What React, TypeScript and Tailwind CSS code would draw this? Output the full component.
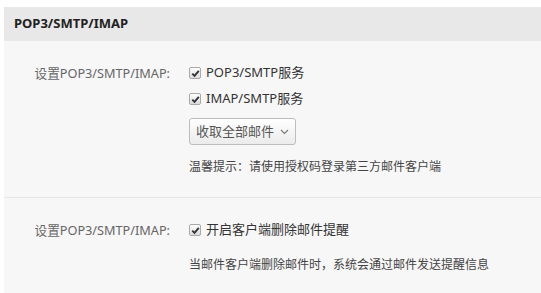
import React from "react";

const FONT = { fontFamily: '"Noto Sans", "Noto Sans CJK SC", sans-serif' };

function Check() {
  return (
    <span className="inline-flex w-[12px] h-[12px] rounded-[2px] border border-[#a9a9a9] bg-gradient-to-b from-[#fdfdfd] to-[#dcdcdc] items-center justify-center mr-[5px] shrink-0">
      <svg width="9" height="9" viewBox="0 0 9 9">
        <path d="M1.3 4.6 L3.5 6.8 L7.8 1.8" fill="none" stroke="#333" strokeWidth="1.9" />
      </svg>
    </span>
  );
}

function CheckRow({ label }: { label: string }) {
  return (
    <div className="h-[20px] flex items-center text-[13px] text-[#333]">
      <Check />
      <span>{label}</span>
    </div>
  );
}

export default function App() {
  return (
    <div className="h-[293px] bg-white pt-[7px] pl-[4px] overflow-hidden" style={FONT}>
      <div className="h-[34px] bg-[#e8e8e8] pl-[10px] flex items-center text-[13px] font-bold text-[#222]">
        POP3/SMTP/IMAP
      </div>

      <div className="bg-[#f7f7f7] pt-[22px] pb-[20px] flex border-b border-[#e6e6e6]">
        <div className="w-[166px] text-right h-[20px] leading-[20px] text-[12.7px] text-[#666]">设置POP3/SMTP/IMAP:</div>
        <div className="ml-[19px] flex flex-col">
          <CheckRow label="POP3/SMTP服务" />
          <div className="mt-[6px]"><CheckRow label="IMAP/SMTP服务" /></div>
          <button className="mt-[9px] w-[107px] h-[27px] rounded-[3px] border border-[#bdbdbd] bg-gradient-to-b from-[#ffffff] to-[#ebebeb] flex items-center justify-center gap-[6px] text-[13px] text-[#555]">
            <span>收取全部邮件</span>
            <svg width="9" height="6" viewBox="0 0 9 6">
              <path d="M1 1 L4.5 4.5 L8 1" fill="none" stroke="#777" strokeWidth="1.1" />
            </svg>
          </button>
          <div className="mt-[12px] h-[20px] leading-[20px] text-[12px] text-[#444]">温馨提示：请使用授权码登录第三方邮件客户端</div>
        </div>
      </div>

      <div className="bg-[#f7f7f7] pt-[22px] pb-[20px] flex">
        <div className="w-[166px] text-right h-[20px] leading-[20px] text-[12.7px] text-[#666]">设置POP3/SMTP/IMAP:</div>
        <div className="ml-[19px] flex flex-col">
          <CheckRow label="开启客户端删除邮件提醒" />
          <div className="mt-[15px] h-[20px] leading-[20px] text-[12px] text-[#444]">当邮件客户端删除邮件时，系统会通过邮件发送提醒信息</div>
        </div>
      </div>
    </div>
  );
}
